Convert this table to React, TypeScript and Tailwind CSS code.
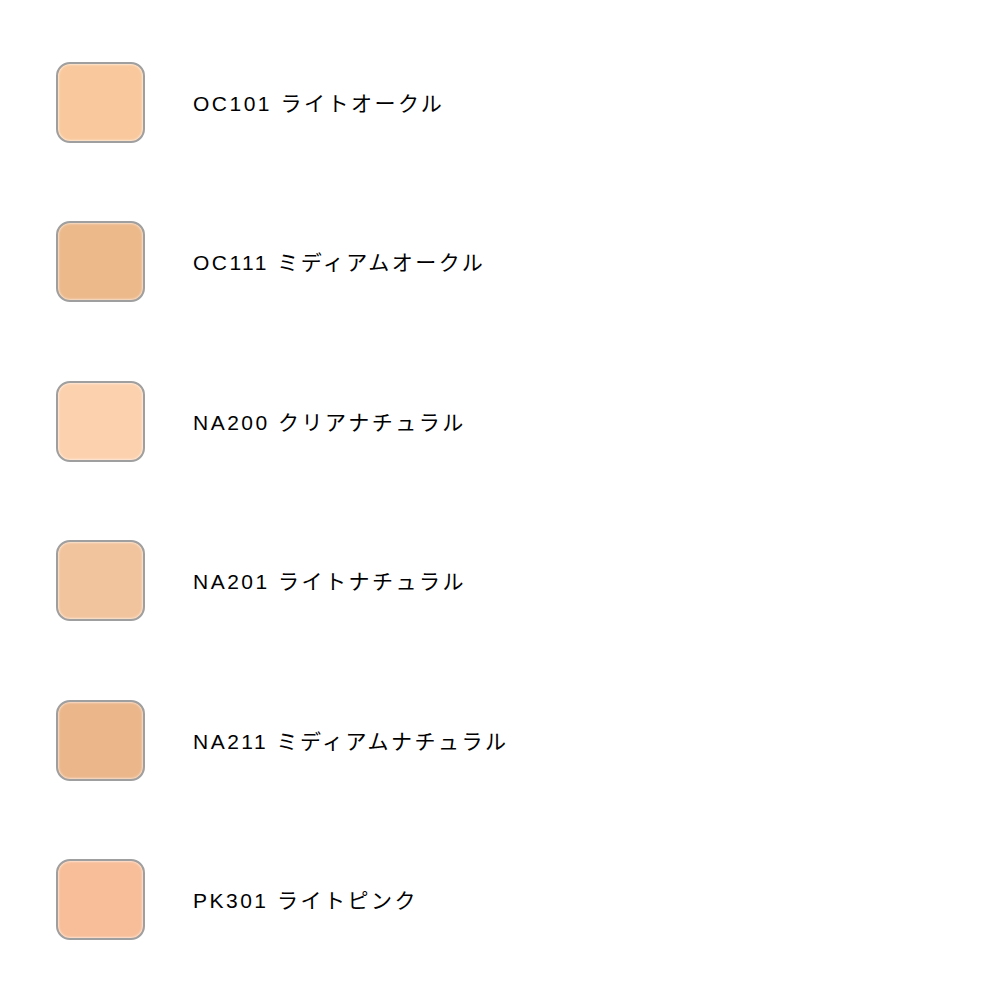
const SHADES = [
  { code: "OC101", name: "ライトオークル", color: "bg-[#f9c99d]" },
  { code: "OC111", name: "ミディアムオークル", color: "bg-[#ecb98b]" },
  { code: "NA200", name: "クリアナチュラル", color: "bg-[#fcd1ae]" },
  { code: "NA201", name: "ライトナチュラル", color: "bg-[#f2c49d]" },
  { code: "NA211", name: "ミディアムナチュラル", color: "bg-[#ebb68a]" },
  { code: "PK301", name: "ライトピンク", color: "bg-[#f8be99]" },
];

export default function App() {
  return (
    <div className="min-h-[1000px] w-[1000px] bg-white pt-[62px]">
      <ul className="flex flex-col gap-[78.4px]">
        {SHADES.map((s) => (
          <li key={s.code} className="flex items-center pl-[56px]">
            <div
              className={`h-[81px] w-[89px] shrink-0 rounded-[14px] border-2 border-[#9f9f9f] ${s.color} shadow-[inset_0_0_2px_1px_rgba(255,255,255,0.55)]`}
            />
            <p className="ml-[48px] mt-[2px] text-[21px] leading-none tracking-[2.5px] text-black [font-family:'Liberation_Sans','Noto_Sans_CJK_JP',sans-serif]">
              {s.code} {s.name}
            </p>
          </li>
        ))}
      </ul>
    </div>
  );
}
